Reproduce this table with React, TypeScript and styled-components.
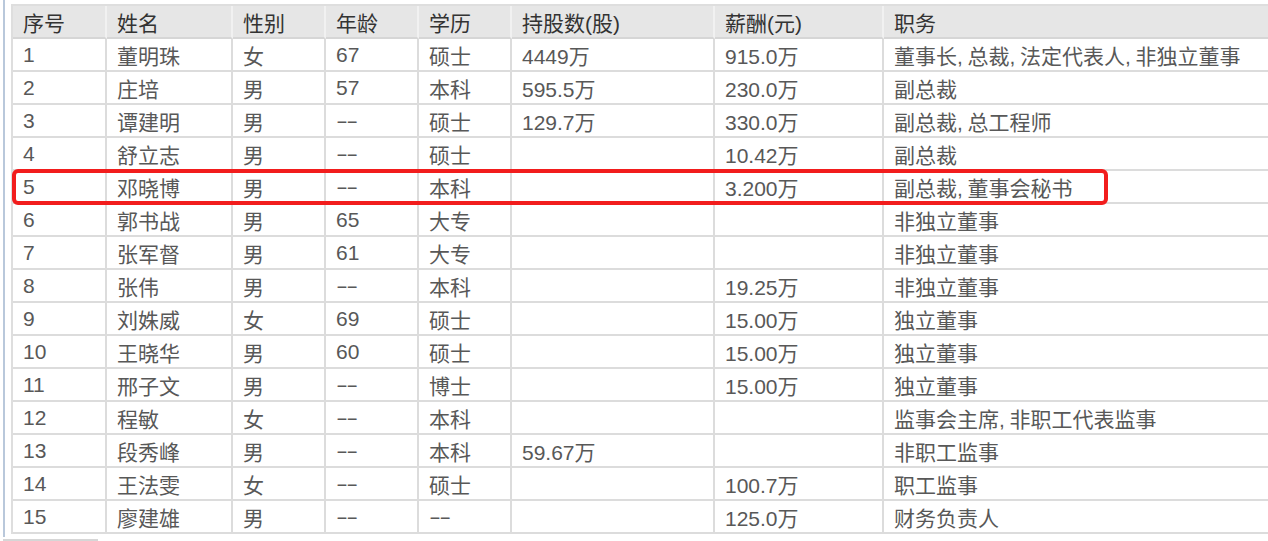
import React from "react";
import styled, { createGlobalStyle } from "styled-components";

interface Manager {
  no: number;
  name: string;
  gender: string;
  age: string;
  edu: string;
  shares: string;
  pay: string;
  duty: string;
}

const managers: Manager[] = [
  { no: 1, name: "董明珠", gender: "女", age: "67", edu: "硕士", shares: "4449万", pay: "915.0万", duty: "董事长,总裁,法定代表人,非独立董事" },
  { no: 2, name: "庄培", gender: "男", age: "57", edu: "本科", shares: "595.5万", pay: "230.0万", duty: "副总裁" },
  { no: 3, name: "谭建明", gender: "男", age: "--", edu: "硕士", shares: "129.7万", pay: "330.0万", duty: "副总裁,总工程师" },
  { no: 4, name: "舒立志", gender: "男", age: "--", edu: "硕士", shares: "", pay: "10.42万", duty: "副总裁" },
  { no: 5, name: "邓晓博", gender: "男", age: "--", edu: "本科", shares: "", pay: "3.200万", duty: "副总裁,董事会秘书" },
  { no: 6, name: "郭书战", gender: "男", age: "65", edu: "大专", shares: "", pay: "", duty: "非独立董事" },
  { no: 7, name: "张军督", gender: "男", age: "61", edu: "大专", shares: "", pay: "", duty: "非独立董事" },
  { no: 8, name: "张伟", gender: "男", age: "--", edu: "本科", shares: "", pay: "19.25万", duty: "非独立董事" },
  { no: 9, name: "刘姝威", gender: "女", age: "69", edu: "硕士", shares: "", pay: "15.00万", duty: "独立董事" },
  { no: 10, name: "王晓华", gender: "男", age: "60", edu: "硕士", shares: "", pay: "15.00万", duty: "独立董事" },
  { no: 11, name: "邢子文", gender: "男", age: "--", edu: "博士", shares: "", pay: "15.00万", duty: "独立董事" },
  { no: 12, name: "程敏", gender: "女", age: "--", edu: "本科", shares: "", pay: "", duty: "监事会主席,非职工代表监事" },
  { no: 13, name: "段秀峰", gender: "男", age: "--", edu: "本科", shares: "59.67万", pay: "", duty: "非职工监事" },
  { no: 14, name: "王法雯", gender: "女", age: "--", edu: "硕士", shares: "", pay: "100.7万", duty: "职工监事" },
  { no: 15, name: "廖建雄", gender: "男", age: "--", edu: "--", shares: "", pay: "125.0万", duty: "财务负责人" },
];

const columns = [
  { title: "序号", width: 94 },
  { title: "姓名", width: 126 },
  { title: "性别", width: 93 },
  { title: "年龄", width: 93 },
  { title: "学历", width: 93 },
  { title: "持股数(股)", width: 203 },
  { title: "薪酬(元)", width: 169 },
  { title: "职务", width: 388 },
];

const HIGHLIGHT_ROW = 5;

const Value = ({ text }: { text: string }) => {
  if (text === "--") return <Dash>--</Dash>;
  const parts = text.split(",");
  return (
    <>
      {parts.map((p, i) => (
        <React.Fragment key={i}>
          {i > 0 && <Comma>,</Comma>}
          {p}
        </React.Fragment>
      ))}
    </>
  );
};

const App = () => {
  return (
    <Page>
      <GlobalStyle />
      <Frame>
        <TableWrap>
          <Table>
            <colgroup>
              {columns.map((c) => (
                <col key={c.title} style={{ width: c.width }} />
              ))}
            </colgroup>
            <thead>
              <tr>
                {columns.map((c) => (
                  <Th key={c.title}>
                    <Value text={c.title} />
                  </Th>
                ))}
              </tr>
            </thead>
            <tbody>
              {managers.map((m) => (
                <tr key={m.no}>
                  <Td>{m.no}</Td>
                  <Td>{m.name}</Td>
                  <Td>{m.gender}</Td>
                  <Td><Value text={m.age} /></Td>
                  <Td><Value text={m.edu} /></Td>
                  <Td>{m.shares}</Td>
                  <Td>{m.pay}</Td>
                  <Td><Value text={m.duty} /></Td>
                </tr>
              ))}
            </tbody>
          </Table>
          <Highlight $row={HIGHLIGHT_ROW} />
        </TableWrap>
      </Frame>
      <FootLine />
    </Page>
  );
};
export default App;

const GlobalStyle = createGlobalStyle`
  html, body {
    margin: 0;
    padding: 0;
    overflow: hidden;
    background: #fff;
  }
  body {
    font-family: "Liberation Sans", "Noto Sans CJK SC", sans-serif;
  }
`;

const Page = styled.div`
  width: 1268px;
  height: 541px;
  padding-left: 3px;
  box-sizing: border-box;
`;

const Frame = styled.div`
  border-left: 2px solid #b9c8db;
  padding: 4px 0 3px 6px;
`;

const TableWrap = styled.div`
  position: relative;
  width: 1261px;
`;

const Table = styled.table`
  table-layout: fixed;
  width: 1261px;
  border-collapse: separate;
  border-spacing: 0;
  border-top: 2px solid #dedede;
  border-left: 2px solid #dedede;
  font-size: 21px;
  font-family: "Liberation Sans", "Noto Sans CJK SC", sans-serif;
`;

const Th = styled.th`
  box-sizing: border-box;
  height: 33px;
  padding: 0 10px;
  text-align: left;
  font-weight: 400;
  color: #333;
  background: #e6e6e6;
  border-right: 2px solid #f1f1f1;
  border-bottom: 2px solid #d6d6d6;
  white-space: nowrap;
  overflow: hidden;
`;

const Td = styled.td`
  box-sizing: border-box;
  height: 33px;
  padding: 0 10px;
  text-align: left;
  color: #585858;
  border-right: 2px solid #dcdcdc;
  border-bottom: 2px solid #dcdcdc;
  white-space: nowrap;
  overflow: hidden;
`;

const Comma = styled.span`
  display: inline-block;
  width: 0.5em;
`;

const Dash = styled.span`
  display: inline-block;
  font-family: "Liberation Sans", sans-serif;
  letter-spacing: -1px;
  transform: scaleX(1.7);
  transform-origin: left center;
`;

const Highlight = styled.div<{ $row: number }>`
  position: absolute;
  left: 1px;
  top: ${(p) => 165 + (p.$row - 5) * 33}px;
  width: 1096px;
  height: 36px;
  box-sizing: border-box;
  border: 4px solid #f21d1d;
  border-radius: 6px;
  pointer-events: none;
`;

const FootLine = styled.div`
  width: 95px;
  margin-top: 2px;
  border-top: 2px solid #d6d6d6;
`;
